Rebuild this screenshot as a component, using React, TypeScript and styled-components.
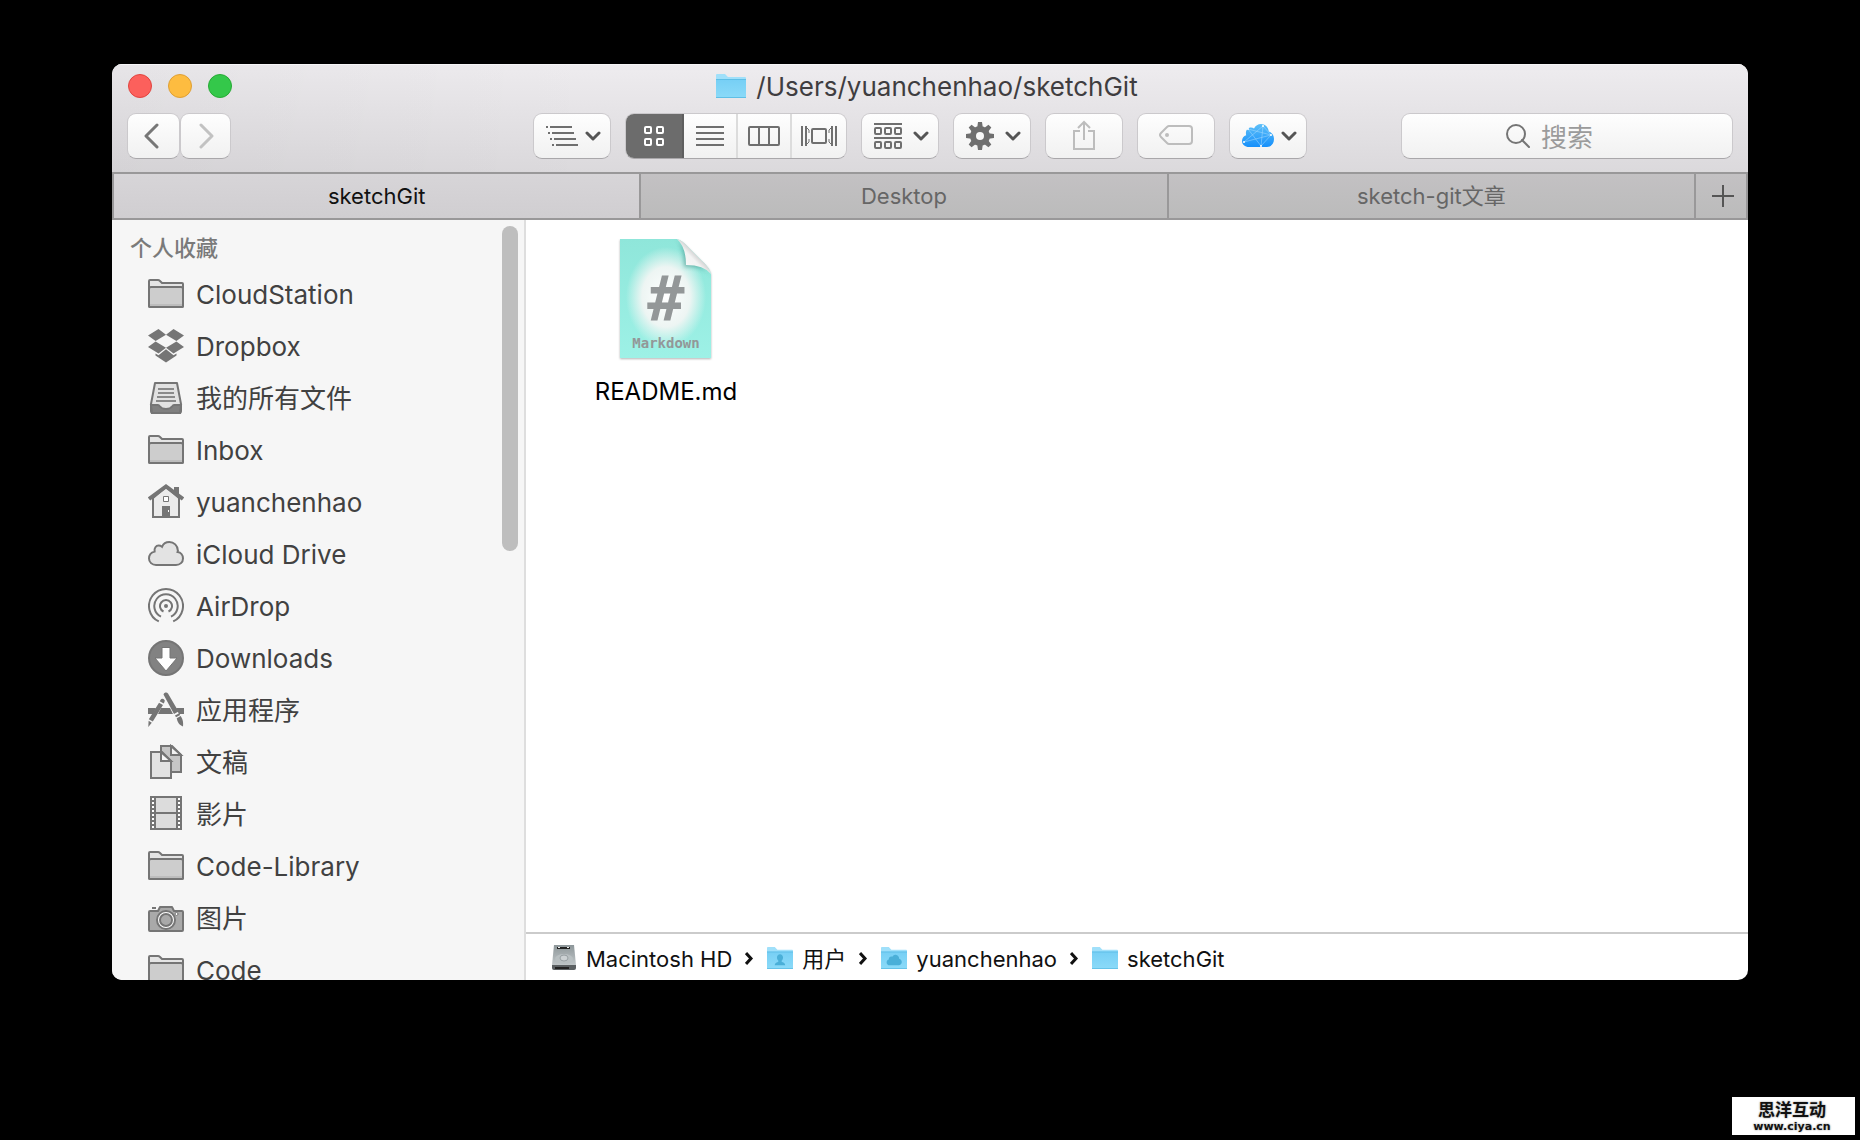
import React from 'react';
import styled, { createGlobalStyle, css } from 'styled-components';

const GlobalStyle = createGlobalStyle`
  *, *::before, *::after { box-sizing: border-box; }
  html, body { margin: 0; background: #000; }
  body, button, input {
    font-family: Inter, 'Noto Sans CJK SC', sans-serif;
  }
  button { margin: 0; padding: 0; border: 0; background: none; cursor: pointer; }
  a { color: inherit; text-decoration: none; }
  ul, ol { margin: 0; padding: 0; list-style: none; }
  svg { display: block; flex: none; }
`;

/* ---------- window frame ---------- */

const Desktop = styled.div`
  height: 100vh;
  padding: 64px 112px 160px;
  background: #000;
  overflow: hidden;
`;

const Window = styled.main`
  display: flex;
  flex-direction: column;
  height: 100%;
  border-radius: 10px;
  overflow: hidden;
  background: #fff;
`;

const Header = styled.header`
  flex: none;
  height: 108px;
  padding: 0 15px;
  background:
    linear-gradient(90deg, rgba(0, 0, 0, 0.03), rgba(0, 0, 0, 0) 30%),
    linear-gradient(#eeecef, #dbd9dc);
  box-shadow: inset 0 1px 0 #f6f5f7;
`;

const TitleRow = styled.div`
  display: grid;
  grid-template-columns: 1fr auto 1fr;
  align-items: center;
  height: 44px;
`;

const TrafficLights = styled.div`
  display: flex;
  gap: 16px;
  padding-left: 1px;
`;

const Light = styled.button<{ $fill: string; $edge: string }>`
  width: 24px;
  height: 24px;
  border: 1px solid ${(p) => p.$edge};
  border-radius: 50%;
  background: ${(p) => p.$fill};
`;

const Title = styled.h1`
  display: flex;
  align-items: center;
  gap: 10px;
  margin: 0;
  padding-right: 6px;
  color: #3f3d40;
  font-size: 26px;
  font-weight: 400;
  line-height: 32px;
`;

const Label = styled.span`
  padding-top: 2px;
`;

/* ---------- toolbar ---------- */

const Toolbar = styled.div`
  display: flex;
  align-items: center;
  margin-top: 5px;
`;

const raised = css`
  height: 46px;
  border: 1px solid #cbc9cc;
  border-bottom-color: #a9a7aa;
  border-radius: 9px;
  background: linear-gradient(#fefefe, #f1f1f1);
`;

const NavButtons = styled.div`
  display: flex;
`;

const NavButton = styled.button<{ $back?: boolean }>`
  ${raised}
  display: flex;
  align-items: center;
  justify-content: center;
  width: ${(p) => (p.$back ? 53 : 51)}px;
  padding-right: ${(p) => (p.$back ? 4 : 0)}px;
`;

const Tools = styled.div`
  display: flex;
  gap: 14px;
  margin-left: auto;
`;

const ToolButton = styled.button<{ $menu?: boolean }>`
  ${raised}
  display: flex;
  align-items: center;
  justify-content: ${(p) => (p.$menu ? 'space-between' : 'center')};
  width: 78px;
  padding: ${(p) => (p.$menu ? '0 9px 0 12px' : '0 0 2px')};
`;

const Segments = styled.div`
  ${raised}
  display: flex;
  overflow: hidden;
`;

const Segment = styled.button<{ $active?: boolean }>`
  display: flex;
  align-items: center;
  justify-content: center;
  width: ${(p) => (p.$active ? 58 : 54)}px;
  border-right: 2px solid ${(p) => (p.$active ? '#5f5f5f' : '#dcdcdc')};
  color: ${(p) => (p.$active ? '#fff' : '#6f6f6f')};
  background: ${(p) => (p.$active ? '#6c6c6c' : 'transparent')};
  &:last-child { border-right: 0; }
`;

const SearchField = styled.label`
  ${raised}
  display: flex;
  align-items: center;
  gap: 11px;
  width: 332px;
  margin-left: 94px;
  padding-left: 104px;
`;

const SearchInput = styled.input`
  flex: 1;
  min-width: 0;
  height: 38px;
  padding: 2px 0 0;
  border: 0;
  outline: 0;
  background: transparent;
  color: #333;
  font-size: 26px;
  &::placeholder { color: #9b9b9b; opacity: 1; }
`;

/* ---------- tabs ---------- */

const TabBar = styled.div`
  display: flex;
  flex: none;
  height: 48px;
  border: 2px solid #999899;
  background: linear-gradient(#c3c1c3, #bbbbbb);
`;

const Tab = styled.button<{ $active?: boolean }>`
  flex: 1;
  border-right: 2px solid #999899;
  color: ${(p) => (p.$active ? '#111' : '#666')};
  background: ${(p) => (p.$active ? 'linear-gradient(#d7d5d8, #d0ced1)' : 'transparent')};
  font-size: 22px;
  line-height: 28px;
`;

const AddTab = styled.button`
  display: flex;
  align-items: center;
  justify-content: center;
  width: 50px;
  padding-left: 4px;
`;

/* ---------- body ---------- */

const Body = styled.div`
  display: flex;
  flex: 1;
  min-height: 0;
`;

const Sidebar = styled.aside`
  display: flex;
  flex: none;
  width: 414px;
  padding: 6px 6px 0 18px;
  border-right: 2px solid #dedede;
  background: #f6f6f6;
  overflow: hidden;
`;

const Favorites = styled.nav`
  flex: 1;
`;

const SectionTitle = styled.h2`
  height: 42px;
  margin: 0;
  padding-top: 6px;
  color: #7a7a7a;
  font-size: 22px;
  font-weight: 500;
  line-height: 32px;
`;

const Place = styled.a`
  display: flex;
  align-items: center;
  gap: 12px;
  height: 52px;
  padding-left: 18px;
  color: #414141;
  font-size: 26px;
  line-height: 36px;
`;

const ScrollThumb = styled.div`
  flex: none;
  width: 16px;
  height: 325px;
  border-radius: 8px;
  background: #bebebe;
`;

const Content = styled.section`
  display: flex;
  flex: 1;
  flex-direction: column;
  min-width: 0;
`;

const Files = styled.ul`
  display: flex;
  flex: 1;
  flex-wrap: wrap;
  align-content: flex-start;
  padding: 19px 50px;
`;

const File = styled.a`
  display: flex;
  flex-direction: column;
  align-items: center;
  gap: 13px;
  width: 180px;
  color: #000;
  font-size: 24px;
  line-height: 32px;
`;

const PathBar = styled.ol`
  display: flex;
  align-items: center;
  flex: none;
  gap: 13px;
  height: 48px;
  padding: 2px 25px 0;
  border-top: 2px solid #cbcbcb;
`;

const PathItem = styled.li`
  display: flex;
  align-items: center;
  gap: 13px;
`;

const PathLink = styled.a`
  display: flex;
  align-items: center;
  gap: 9px;
  color: #111;
  font-size: 22px;
  line-height: 28px;
`;

const Badge = styled.a`
  position: fixed;
  right: 5px;
  bottom: 5px;
  display: flex;
  flex-direction: column;
  align-items: center;
  width: 123px;
  height: 38px;
  padding: 4px 3px 0 0;
  background: #fff;
  color: #111;
  text-shadow: 0 0 2px #bbb, 0 0 2px #bbb;
`;

const BadgeName = styled.span`
  font: 700 17px/20px 'Liberation Sans', 'Noto Sans CJK SC', sans-serif;
`;

const BadgeUrl = styled.span`
  font: 700 11px/12px 'DejaVu Sans', sans-serif;
`;

/* ---------- toolbar icons ---------- */

const Chevron = () => (
  <svg width="16" height="10" viewBox="0 0 16 10" fill="none" stroke="#555" strokeWidth="3" strokeLinecap="round" strokeLinejoin="round">
    <path d="M2 2l6 6 6-6" />
  </svg>
);

const Arrow = ({ color, back }: { color: string; back?: boolean }) => (
  <svg width="16" height="26" viewBox="0 0 16 26" fill="none" stroke={color} strokeWidth="3" strokeLinecap="round" strokeLinejoin="round">
    <path d={back ? 'M13 2L2 13l11 11' : 'M3 2l11 11L3 24'} />
  </svg>
);

const ArrangeIcon = () => (
  <svg width="32" height="20" viewBox="0 0 32 20" fill="#6f6f6f">
    {[0, 1, 2, 3].map((i) => (
      <React.Fragment key={i}>
        <rect x={i * 2} y={i * 6} width="2" height="2" />
        <rect x={i * 2 + 4} y={i * 6} width="22" height="2" />
      </React.Fragment>
    ))}
  </svg>
);

const GridIcon = () => (
  <svg width="20" height="20" viewBox="0 0 20 20" fill="none" stroke="currentColor" strokeWidth="2">
    {[1, 13].map((x) => [1, 13].map((y) => <rect key={`${x}-${y}`} x={x} y={y} width="6" height="6" rx="1" />))}
  </svg>
);

const ListIcon = () => (
  <svg width="28" height="20" viewBox="0 0 28 20" fill="currentColor">
    {[0, 6, 12, 18].map((y) => <rect key={y} y={y} width="28" height="2" />)}
  </svg>
);

const ColumnsIcon = () => (
  <svg width="32" height="20" viewBox="0 0 32 20" fill="none" stroke="currentColor" strokeWidth="2">
    <rect x="1" y="1" width="30" height="18" rx="1" />
    <path d="M11 1v18M21 1v18" />
  </svg>
);

const FlowIcon = () => (
  <svg width="36" height="20" viewBox="0 0 36 20" fill="none" stroke="currentColor" strokeWidth="2">
    <path d="M1 0v20M5 0v20M31 0v20M35 0v20" />
    <path d="M6 2l2 2v3M6 18l2-2v-3M30 2l-2 2v3M30 18l-2-2v-3" strokeWidth="1" />
    <rect x="11" y="3" width="14" height="14" rx="1" />
  </svg>
);

const GroupIcon = () => (
  <svg width="28" height="26" viewBox="0 0 28 26" fill="none" stroke="#6f6f6f" strokeWidth="2">
    <path d="M0 1h28M0 15h28" />
    {[1, 11, 21].map((x) => [5, 19].map((y) => <rect key={`${x}-${y}`} x={x} y={y} width="6" height="6" rx="1" />))}
  </svg>
);

const GearIcon = () => (
  <svg width="28" height="28" viewBox="0 0 28 28">
    <g fill="#6f6f6f">
      {[0, 45, 90, 135].map((a) => (
        <path key={a} transform={`rotate(${a} 14 14)`} d="M12 0h4l1 7v14l-1 7h-4l-1-7V7z" />
      ))}
    </g>
    <circle cx="14" cy="14" r="7" fill="none" stroke="#6f6f6f" strokeWidth="6" />
    <circle cx="14" cy="14" r="4" fill="#f8f8f8" />
  </svg>
);

const ShareIcon = () => (
  <svg width="22" height="30" viewBox="0 0 22 30" fill="none" stroke="#bdbdbd" strokeWidth="2">
    <path d="M7 11H1v18h20V11h-6M11 20V2M5 8l6-6 6 6" />
  </svg>
);

const TagIcon = () => (
  <svg width="34" height="20" viewBox="0 0 34 20" fill="none" stroke="#bdbdbd" strokeWidth="2">
    <path d="M10 1h20q3 0 3 3v12q0 3-3 3H10q-1 0-2-1l-6-6q-2-2 0-4l6-6q1-1 2-1z" />
    <circle cx="8" cy="10" r="2" fill="#bdbdbd" stroke="none" />
  </svg>
);

const CloudAppIcon = () => (
  <svg width="32" height="24" viewBox="0 0 32 24">
    <defs>
      <linearGradient id="cloudApp" x1="0" y1="0" x2="0" y2="1">
        <stop offset="0" stopColor="#5fc0f8" />
        <stop offset="1" stopColor="#1690fb" />
      </linearGradient>
    </defs>
    <path fill="url(#cloudApp)" d="M7 23C3 23 0 20.500 0 17c0-3 1.700-5 4.200-5.800C3 7 5.500 3.500 9 3.500c1.200 0 2 .3 3 1C13.500 1.500 16 0 19 0c4 0 7.400 3 7.800 7.500C30 8.500 32 11.500 32 15c0 4.600-3 8-7 8z" />
    <path fill="none" stroke="#a8dcff" strokeWidth="1" strokeOpacity=".5" d="M2 18L21 2l-2 20L6 5M2 18l27-7-10 11M6 5l23 6L21 2" />
    <g fill="#fff">
      <circle cx="6" cy="5" r="1" /><circle cx="21" cy="2" r="1" /><circle cx="29" cy="11" r="1" />
      <circle cx="19" cy="22" r="1" /><circle cx="2" cy="18" r="1" />
    </g>
  </svg>
);

const SearchIcon = () => (
  <svg width="24" height="24" viewBox="0 0 24 24" fill="none" stroke="#757575" strokeWidth="2" strokeLinecap="round">
    <circle cx="10" cy="10" r="9" />
    <path d="M16 16l7 7" />
  </svg>
);

const PlusIcon = () => (
  <svg width="22" height="22" viewBox="0 0 22 22" fill="#555">
    <path d="M10 0h2v10h10v2H12v10h-2V12H0v-2h10z" />
  </svg>
);

const BlueFolder = ({ width, height, mark }: { width: number; height: number; mark?: 'user' | 'cloud' }) => (
  <svg width={width} height={height} viewBox="0 0 30 24" preserveAspectRatio="none">
    <defs>
      <linearGradient id="folderFront" x1="0" y1="0" x2="0" y2="1">
        <stop offset="0" stopColor="#76cff5" />
        <stop offset="1" stopColor="#8bdaf8" />
      </linearGradient>
    </defs>
    <path fill="#a0e0fa" d="M0 1q0-1 1-1h8l3 3h17q1 0 1 1v6H0z" />
    <path fill="url(#folderFront)" d="M0 5h30v18q0 1-1 1H1q-1 0-1-1z" />
    <path fill="none" stroke="#5fbfe6" d="M0 5.500h30M0 23.500h30" />
    {mark === 'user' && (
      <path fill="#4aafd8" d="M15 8c2 0 3.500 1.500 3.500 3.500 0 1.600-.8 3-1.800 3.700.2 1.800 4.300 1.300 4.300 4.800H9c0-3.500 4.100-3 4.300-4.800-1-.7-1.800-2.100-1.800-3.700C11.500 9.500 13 8 15 8z" />
    )}
    {mark === 'cloud' && (
      <path fill="#4aafd8" d="M10 20c-2 0-3.500-1.300-3.500-3.200 0-1.600 1-2.800 2.500-3.100-.2-2.500 2-3.900 4-3C14 9 15.500 8.200 17 8.400c2.200.2 4 1.900 4 4.300 1.800.4 3 1.900 3 3.700 0 2.100-1.600 3.600-3.500 3.600z" />
    )}
  </svg>
);

const DiskIcon = () => (
  <svg width="26" height="26" viewBox="0 0 26 26">
    <defs>
      <linearGradient id="disk" x1="0" y1="0" x2="0" y2="1">
        <stop offset="0" stopColor="#8d9699" />
        <stop offset="1" stopColor="#c0c6c8" />
      </linearGradient>
    </defs>
    <path fill="url(#disk)" d="M3 0h20l2 20H1z" />
    <path fill="#5b6062" d="M1 20h24v3q0 2-2 2H3q-2 0-2-2z" />
    <path fill="#222" d="M6 2h13v2H6zM4 22h14v2H4z" />
    <path fill="#efefef" d="M7 2h2v1H7zM16 2h2v1h-2z" />
    <ellipse cx="13" cy="14" rx="9" ry="5" fill="#b8bfc1" />
    <ellipse cx="13" cy="13" rx="4" ry="3" fill="#ccd1d3" stroke="#98a0a3" />
  </svg>
);

const Crumb = () => (
  <svg width="9" height="13" viewBox="0 0 9 13" fill="none" stroke="#111" strokeWidth="3" aria-hidden="true">
    <path d="M1 1l5 5.500L1 12" />
  </svg>
);

/* ---------- sidebar icons ---------- */

const Glyph = ({ children }: { children: React.ReactNode }) => (
  <svg width="36" height="36" viewBox="0 0 36 36" fill="none" stroke="#757575" strokeWidth="2" aria-hidden="true">
    {children}
  </svg>
);

const FolderGlyph = () => (
  <Glyph>
    <path fill="#e4e4e4" d="M1 30V5q0-1 1-1h8q1 0 2 1l2 2h20q1 0 1 1v22q0 1-1 1H2q-1 0-1-1z" />
    <path fill="#cdcdcd" d="M1 13q0-2 2-2h30q2 0 2 2v17q0 1-1 1H2q-1 0-1-1z" />
    <path stroke="#bdbdbd" d="M2 29h32" />
  </Glyph>
);

const DropboxGlyph = () => (
  <Glyph>
    <g fill="#757575" stroke="none">
      <path d="M10.500 1L18 6.700 7.600 13 0 7.500zM25.500 1L18 6.700 28.400 13 36 7.500zM0 19l7.600-5.500L18 19.700 10.500 25.500zM36 19l-7.600-5.500L18 19.700l7.500 5.800z" />
      <path d="M18 21.200l7.500 6 3-1.800v2.200L18 34.500 7.500 27.600v-2.200l3 1.800z" />
    </g>
  </Glyph>
);

const TrayGlyph = () => (
  <Glyph>
    <path fill="#e2e2e2" strokeLinejoin="round" d="M7 3h22l4 21v7q0 2-2 2H5q-2 0-2-2v-7z" />
    <path fill="#808080" d="M3 25h7q1 0 1.500 1 2 3 6.500 3t6.500-3q.5-1 1.500-1h7l-1 8H4z" />
    <path stroke="#8a8a8a" d="M10 9h16M10 13h16M9 17h18M8 21h20" />
  </Glyph>
);

const HouseGlyph = () => (
  <Glyph>
    <path fill="#757575" stroke="none" d="M26 3h5v10h-5z" />
    <path fill="#ebebeb" d="M5 14L18 3l13 11v19H5z" />
    <path strokeWidth="4" d="M1 15L18 2.500 35 15" />
    <path fill="#757575" stroke="none" d="M14 22h8v11h-8z" />
    <path fill="#fff" strokeWidth="1" d="M15.500 12.500h5v5h-5z" />
    <path stroke="#fff" strokeWidth="1" d="M20.500 26v2" />
  </Glyph>
);

const CloudGlyph = () => (
  <Glyph>
    <path fill="#e3e3e3" d="M8 29C4 29 1 26.200 1 22.500c0-3.500 2.300-6.100 5.600-6.900C6 12 8 9.600 10.600 9.600c1.400 0 2.400.4 3.400 1.200C15.300 7.800 18 6 21.300 6c4.700 0 8.300 3.600 8.500 8.200.1.800 0 1.200-.2 1.700 3.200.4 5.400 3.100 5.400 6.500 0 3.800-3 6.600-7 6.600z" />
  </Glyph>
);

const AirDropGlyph = () => (
  <Glyph>
    <circle cx="18" cy="18" r="2" fill="#757575" stroke="none" />
    <path d="M10.800 33.400a17 17 0 1 1 14.400 0M13 28.600a11.700 11.700 0 1 1 10 0M15.500 23.500a6 6 0 1 1 5 0" />
  </Glyph>
);

const DownloadGlyph = () => (
  <Glyph>
    <circle cx="18" cy="18" r="17" fill="#828282" />
    <path fill="#fff" strokeWidth="1" d="M14 7.500h8V18h7L18 31 7 18h7z" />
  </Glyph>
);

const AppsGlyph = () => (
  <Glyph>
    <g fill="#757575" stroke="none">
      <path d="M0 16h8l-3 6H0zM13 16h9l3 6H10zM28 16h8v6h-5z" />
      <path d="M15.500 2.500a2.500 2.500 0 0 1 4.500-1l10.500 18-4.500 2.500zM27 23.500l4.200-2.300 1 1.800-4.200 2.300zM28.700 26.300l4-2.300c1.500 2.500 3 5 2.300 10.500-4-1.500-5.500-4.500-6.300-8.200z" />
      <path d="M12.500 8a2.200 2.200 0 0 1 4 2l-.8 1.500-4-2.200zM11 10.800l4 2.200L4.800 29.500l-4-2.300zM.6 28.800l3.200 1.900L.3 35z" />
    </g>
  </Glyph>
);

const DocsGlyph = () => (
  <Glyph>
    <path fill="#c6c6c6" d="M13 2h11l9 9v17H13z" />
    <path fill="#f2f2f2" d="M23 2v9h10z" />
    <path fill="#e2e2e2" d="M3 8h11l9 9v17H3z" />
    <path fill="#f8f8f8" d="M13 8v9h10z" />
  </Glyph>
);

const FilmGlyph = () => (
  <Glyph>
    <path fill="#757575" stroke="none" d="M2 0h32v34H2z" />
    <path fill="#dcdcdc" stroke="none" d="M8 2h20v14H8zM8 18h20v14H8z" />
    <path stroke="#fff" strokeDasharray="2 2" d="M5 2v31M31 2v31" />
  </Glyph>
);

const CameraGlyph = () => (
  <Glyph>
    <path fill="#a9a9a9" strokeLinejoin="round" d="M1 12q0-1 1-1h8l2-4h12l2 4h8q1 0 1 1v18q0 1-1 1H2q-1 0-1-1z" />
    <circle cx="18" cy="20" r="9" fill="#fff" />
    <circle cx="18" cy="20" r="6" fill="#a9a9a9" />
    <path d="M4 8h4" />
    <circle cx="28.500" cy="14" r="1.500" fill="#fff" strokeWidth="1" />
  </Glyph>
);

const MarkdownFileIcon = () => (
  <svg width="96" height="124" viewBox="-2 0 96 124" role="img" aria-label="Markdown">
    <defs>
      <radialGradient id="pageGlow" cx="46" cy="58" r="1" gradientUnits="userSpaceOnUse" gradientTransform="translate(46 58) scale(40 50) translate(-46 -58)">
        <stop offset="0" stopColor="#fff" />
        <stop offset=".6" stopColor="#edf5f3" />
        <stop offset="1" stopColor="#edf5f3" stopOpacity="0" />
      </radialGradient>
      <linearGradient id="page" x1="0" y1="0" x2="0" y2="1">
        <stop offset="0" stopColor="#8fe6da" />
        <stop offset="1" stopColor="#9df1e6" />
      </linearGradient>
      <linearGradient id="curl" x1="0" y1="1" x2="1" y2="0">
        <stop offset="0" stopColor="#fff" />
        <stop offset=".45" stopColor="#f2f2f2" />
        <stop offset=".7" stopColor="#aaa" />
      </linearGradient>
      <filter id="pageShadow" x="-10%" y="-10%" width="120%" height="120%">
        <feDropShadow dx="0" dy="1" stdDeviation="1" floodColor="#000" floodOpacity=".3" />
      </filter>
      <filter id="curlShadow" x="-50%" y="-50%" width="200%" height="200%">
        <feGaussianBlur stdDeviation="2" />
      </filter>
      <clipPath id="pageClip"><path d="M0 0h57l34 34v85H0z" /></clipPath>
    </defs>
    <path d="M0 0h57q5 1 12 9l13 13q8 7 9 13v84H0z" fill="url(#page)" filter="url(#pageShadow)" />
    <g clipPath="url(#pageClip)">
      <rect width="92" height="119" fill="url(#pageGlow)" />
      <path d="M57 0q8 10 7 28 20-2 28 10z" fill="#3c8f86" opacity=".6" filter="url(#curlShadow)" />
    </g>
    <path d="M57 0q9 8 9 26 18 0 25 9-1-6-9-13L69 9Q62 1 57 0z" fill="url(#curl)" />
    <g fill="#939798" textAnchor="middle" fontFamily="'DejaVu Sans Mono', monospace" fontWeight="700">
      <text x="46" y="81" fontSize="62">#</text>
      <text x="46" y="109" fontSize="14">Markdown</text>
    </g>
  </svg>
);

/* ---------- data ---------- */

const places: { name: string; icon: React.FC }[] = [
  { name: 'CloudStation', icon: FolderGlyph },
  { name: 'Dropbox', icon: DropboxGlyph },
  { name: '我的所有文件', icon: TrayGlyph },
  { name: 'Inbox', icon: FolderGlyph },
  { name: 'yuanchenhao', icon: HouseGlyph },
  { name: 'iCloud Drive', icon: CloudGlyph },
  { name: 'AirDrop', icon: AirDropGlyph },
  { name: 'Downloads', icon: DownloadGlyph },
  { name: '应用程序', icon: AppsGlyph },
  { name: '文稿', icon: DocsGlyph },
  { name: '影片', icon: FilmGlyph },
  { name: 'Code-Library', icon: FolderGlyph },
  { name: '图片', icon: CameraGlyph },
  { name: 'Code', icon: FolderGlyph },
];

const tabs = ['sketchGit', 'Desktop', 'sketch-git文章'];

const path = [
  { name: 'Macintosh HD', icon: <DiskIcon /> },
  { name: '用户', icon: <BlueFolder width={26} height={22} mark="user" /> },
  { name: 'yuanchenhao', icon: <BlueFolder width={26} height={22} mark="cloud" /> },
  { name: 'sketchGit', icon: <BlueFolder width={26} height={22} /> },
];

export default function App() {
  return (
    <Desktop>
      <GlobalStyle />
      <Window>
        <Header>
          <TitleRow>
            <TrafficLights>
              <Light $fill="#fc605c" $edge="#e0443f" aria-label="Close" />
              <Light $fill="#fdbc40" $edge="#de9f34" aria-label="Minimize" />
              <Light $fill="#34c84a" $edge="#27aa35" aria-label="Zoom" />
            </TrafficLights>
            <Title>
              <BlueFolder width={30} height={24} />
              <Label>/Users/yuanchenhao/sketchGit</Label>
            </Title>
          </TitleRow>
          <Toolbar>
            <NavButtons>
              <NavButton $back aria-label="Back"><Arrow back color="#777" /></NavButton>
              <NavButton aria-label="Forward"><Arrow color="#c2c2c2" /></NavButton>
            </NavButtons>
            <Tools>
              <ToolButton $menu aria-label="Arrange"><ArrangeIcon /><Chevron /></ToolButton>
              <Segments role="group" aria-label="View">
                <Segment $active aria-label="Icons" aria-pressed="true"><GridIcon /></Segment>
                <Segment aria-label="List"><ListIcon /></Segment>
                <Segment aria-label="Columns"><ColumnsIcon /></Segment>
                <Segment aria-label="Cover Flow"><FlowIcon /></Segment>
              </Segments>
              <ToolButton $menu aria-label="Group"><GroupIcon /><Chevron /></ToolButton>
              <ToolButton $menu aria-label="Action"><GearIcon /><Chevron /></ToolButton>
              <ToolButton aria-label="Share"><ShareIcon /></ToolButton>
              <ToolButton aria-label="Tags"><TagIcon /></ToolButton>
              <ToolButton $menu aria-label="Cloud"><CloudAppIcon /><Chevron /></ToolButton>
            </Tools>
            <SearchField>
              <SearchIcon />
              <SearchInput type="text" placeholder="搜索" aria-label="搜索" />
            </SearchField>
          </Toolbar>
        </Header>
        <TabBar role="tablist">
          {tabs.map((name, i) => (
            <Tab key={name} role="tab" $active={i === 0} aria-selected={i === 0}>{name}</Tab>
          ))}
          <AddTab aria-label="New tab"><PlusIcon /></AddTab>
        </TabBar>
        <Body>
          <Sidebar>
            <Favorites>
              <SectionTitle>个人收藏</SectionTitle>
              <ul>
                {places.map(({ name, icon: Icon }) => (
                  <li key={name}><Place href="#"><Icon /><Label>{name}</Label></Place></li>
                ))}
              </ul>
            </Favorites>
            <ScrollThumb />
          </Sidebar>
          <Content>
            <Files>
              <li>
                <File href="#"><MarkdownFileIcon />README.md</File>
              </li>
            </Files>
            <PathBar>
              {path.map(({ name, icon }, i) => (
                <PathItem key={name}>
                  {i > 0 && <Crumb />}
                  <PathLink href="#">{icon}<Label>{name}</Label></PathLink>
                </PathItem>
              ))}
            </PathBar>
          </Content>
        </Body>
      </Window>
      <Badge href="#">
        <BadgeName>思洋互动</BadgeName>
        <BadgeUrl>www.ciya.cn</BadgeUrl>
      </Badge>
    </Desktop>
  );
}
